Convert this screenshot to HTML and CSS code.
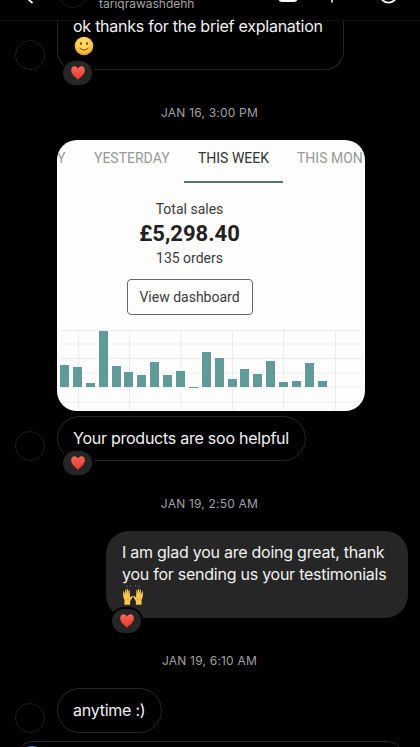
FILE: index.html
```html
<!DOCTYPE html>
<html lang="en">
<head>
<meta charset="utf-8">
<title>Messages</title>
<link rel="stylesheet" href="styles.css">
</head>
<body>
<svg class="defs" aria-hidden="true">
  <defs>
    <linearGradient id="red" x1="0" y1="0" x2="0" y2="1"><stop offset="0" stop-color="#ff6659"/><stop offset="1" stop-color="#e2382c"/></linearGradient>
    <radialGradient id="yellow" cx=".5" cy=".35" r=".65"><stop offset="0" stop-color="#ffe36b"/><stop offset=".65" stop-color="#fbc94a"/><stop offset="1" stop-color="#dc9428"/></radialGradient>
    <symbol id="heart" viewBox="0 0 14 14"><path fill="url(#red)" d="M7 13.8C5.1 12.1.2 8.7.2 4.1.2 1.8 1.7.3 3.6.3 5.2.3 6.4 1.2 7 2.7 7.6 1.2 8.8.3 10.4.3c1.9 0 3.4 1.5 3.4 3.8 0 4.6-4.9 8-6.8 9.7Z"/></symbol>
  </defs>
</svg>
<main class="phone">
  <header class="header">
    <svg class="back" viewBox="0 0 8 12"><path d="M6 -5L1 -1L5.500 3"/></svg>
    <span class="header-avatar"></span>
    <span class="handle">tariqrawashdehh</span>
    <svg class="actions" viewBox="0 0 130 20"><rect x="8.500" y="-12" width="19" height="14" rx="3.500" fill="#fff"/><path d="M62 -4V2.500" stroke="#fff" stroke-width="1.500"/><circle cx="118.500" cy="-6" r="8.600" fill="none" stroke="#fff" stroke-width="1.800"/></svg>
  </header>
  <section class="thread">
    <div class="row first">
      <span class="avatar"></span>
      <div class="bubble in"><p class="line explain">ok thanks for the brief explanation</p>
        <svg class="smile" viewBox="0 0 20 20"><circle cx="10" cy="10" r="9.300" fill="url(#yellow)"/><ellipse cx="7" cy="7.600" rx=".9" ry="1.500" fill="#6b4316"/><ellipse cx="13" cy="7.600" rx=".9" ry="1.500" fill="#6b4316"/><path d="M5.500 12Q10 16 14.500 12" fill="none" stroke="#754914" stroke-width="1"/></svg>
        <span class="reaction"><svg><use href="#heart"/></svg></span></div>
    </div>
    <time class="date d1">JAN 16, 3:00 PM</time>
    <article class="card">
      <nav class="tabs"><span class="tab today">Y</span><span class="tab yesterday">YESTERDAY</span><span class="tab active">THIS WEEK</span><span class="tab month">THIS MON</span></nav>
      <div class="summary"><p class="label">Total sales</p><p class="amount">£5,298.40</p><p class="orders">135 orders</p><button class="dashboard">View dashboard</button></div>
      <div class="chart">
        <svg class="grid" viewBox="0 0 308 80"><path d="M3 .5H306M3 14H306M3 28.500H306M3 43H306M3 57H306M3 72H306M21.500 0V80M72.500 0V80M124 0V80M175.500 0V80M226.500 0V80M278.500 0V80"/></svg>
        <div class="bars"><i style="height:22px"></i><i style="height:20px"></i><i style="height:4px"></i><i style="height:56px"></i><i style="height:21px"></i><i style="height:15px"></i><i style="height:12px"></i><i style="height:25px"></i><i style="height:11.5px"></i><i style="height:15.500px"></i><i class="negative" style="height:1.5px"></i><i style="height:35px"></i><i style="height:29px"></i><i style="height:8px"></i><i style="height:17.500px"></i><i style="height:12.500px"></i><i style="height:26px"></i><i style="height:5px"></i><i style="height:6px"></i><i style="height:24px"></i><i style="height:6px"></i></div>
      </div>
    </article>
    <div class="row second">
      <span class="avatar"></span>
      <div class="bubble in"><p class="line helpful">Your products are soo helpful</p><span class="reaction"><svg><use href="#heart"/></svg></span></div>
    </div>
    <time class="date d2">JAN 19, 2:50 AM</time>
    <div class="bubble out"><p class="line glad">I am glad you are doing great, thank</p><p class="line sending">you for sending us your testimonials</p>
      <svg class="hands" viewBox="0 0 22 22"><g id="hand"><path fill="#f9c54d" d="M1.200 6.200Q.3 7 .8 12L2 16v4.700h6V17l2.700-4.500q.4-1.300-.8-1.300L7.800 13 7.500 5.500Q7 4.300 6.500 5.500L6.200 9 5.700 4.500Q5 3.500 4.600 4.700L4.500 9 3.600 5Q2.800 4.200 2.600 5.400L2.700 10Z"/><path fill="none" stroke="#d99632" stroke-width=".6" d="M2.500 16Q5 14 7.500 15"/></g><use href="#hand" transform="matrix(-1 0 0 1 22 0)"/><path d="M5 2.300L4.300 1M8.500 1.500L8.200 0M13.500 1.500L13.800 0M17 2.300L17.700 1" stroke="#777" stroke-width="1"/></svg>
      <span class="reaction"><svg><use href="#heart"/></svg></span></div>
    <time class="date d3">JAN 19, 6:10 AM</time>
    <div class="row last"><span class="avatar"></span><div class="bubble in"><p class="line anytime">anytime :)</p></div></div>
  </section>
  <footer class="composer"><span class="camera"></span></footer>
</main>
</body>
</html>
```
FILE: styles.css
```css
* { box-sizing: border-box; }
body { margin: 0; background: #000; }
p { margin: 0; }
.defs { position: absolute; width: 0; height: 0; }
.phone { width: 420px; height: 747px; overflow: hidden; background: #000; color: #f2f2f2; font-family: Inter, "Liberation Sans", sans-serif; display: flex; flex-direction: column; }
.header { height: 21px; flex: none; overflow: hidden; display: flex; align-items: flex-start; border-bottom: 1px solid #0e0e0e; }
.back { width: 8px; height: 12px; margin-left: 27px; fill: none; stroke: #fff; stroke-width: 1.8; flex: none; }
.header-avatar { width: 30px; height: 30px; margin: -22px 0 0 23px; border: 1px solid #1b1b1b; border-radius: 50%; flex: none; }
.handle { margin: -4px 0 0 11px; font-size: 12px; line-height: 15px; color: #a5a5a5; width: 171px; white-space: nowrap; }
.actions { width: 130px; height: 20px; flex: none; }
.thread { height: 720px; flex: none; display: flex; flex-direction: column; }
.row { display: flex; align-items: flex-end; padding-left: 15px; gap: 12px; flex: none; }
.avatar { width: 30px; height: 30px; border: 1px solid #1d1d1d; border-radius: 50%; flex: none; }
.bubble { position: relative; flex: none; }
.in { border: 1px solid #262626; border-radius: 23px; }
.line { font-size: 16px; line-height: 21.5px; white-space: nowrap; letter-spacing: -.25px; }
.first { height: 49px; }
.first .bubble { width: 287px; height: 49px; padding: 0 0 0 15px; border-top: 0; border-radius: 0 0 19px 19px; }
.first .line { height: 15px; line-height: 10px; }
.smile { display: block; width: 20px; height: 20px; margin: 0 0 0 1px; }
.reaction { position: absolute; left: 3px; bottom: -17px; width: 33px; height: 28px; border: 2px solid #000; border-radius: 14px; background: #262626; display: flex; align-items: center; justify-content: center; }
.reaction svg { width: 14px; height: 14px; }
.first .reaction { bottom: -18px; }
.date { height: 20px; line-height: 20px; text-align: center; font-size: 12px; letter-spacing: .2px; color: #a0a0a0; flex: none; padding-right: 1px; }
.d1 { margin-top: 33px; }
.card { width: 307.5px; height: 271px; margin: 16.5px 0 0 57px; border-radius: 20px; background: #fdfdfd; overflow: hidden; flex: none; font-family: Roboto, sans-serif; color: #3b3b3b; display: flex; flex-direction: column; }
.tabs { display: flex; height: 43px; flex: none; }
.tab { font-size: 14px; line-height: 37px; white-space: nowrap; color: #999; flex: none; }
.today { width: 9px; margin-right: 28px; }
.yesterday { width: 90px; }
.active { width: 99px; text-align: center; color: #333; border-bottom: 2px solid #587071; }
.month { margin-left: 14px; }
.summary { width: 265px; height: 147px; flex: none; display: flex; flex-direction: column; align-items: center; padding-top: 16px; }
.label { font-size: 14px; line-height: 20px; }
.amount { font-size: 22px; line-height: 30px; font-weight: 700; color: #222; }
.orders { font-size: 14px; line-height: 18px; }
.dashboard { width: 126px; height: 36px; margin-top: 12px; border: 1px solid #666; border-radius: 4px; background: transparent; font: 14px Roboto, sans-serif; color: #3b3b3b; padding: 0; flex: none; white-space: nowrap; }
.chart { height: 81px; position: relative; flex: none; }
.grid { position: absolute; inset: 0; width: 308px; height: 80px; fill: none; stroke: #ebeded; stroke-width: 1; }
.bars { position: relative; height: 57px; padding-left: 3px; display: flex; align-items: flex-end; gap: 3.9px; }
.bars i { width: 9px; background: #619b97; flex: none; }
.bars .negative { margin-bottom: -1.5px; }
.second { margin-top: 5.5px; height: 45px; }
.second .bubble { width: 249px; height: 45px; padding: 10.5px 15px; }
.d2 { margin-top: 33px; }
.out { width: 302px; height: 87px; margin: 17px 0 0 106px; padding: 11px 16px; border-radius: 23px; background: #262626; }
.out .reaction { left: 4px; bottom: -17px; }
.hands { display: block; width: 22px; height: 21px; }
.d3 { margin-top: 33px; }
.last { margin-top: 17px; height: 45px; }
.last .bubble { width: 105px; height: 45px; padding: 10.5px 15px; }
.composer { width: 392px; height: 40px; margin-left: 14px; border: 1px solid #292929; border-radius: 20px; padding: 4px 0 0 3px; flex: none; }
.camera { display: block; width: 28px; height: 28px; border-radius: 50%; background: #3975c8; }
```
